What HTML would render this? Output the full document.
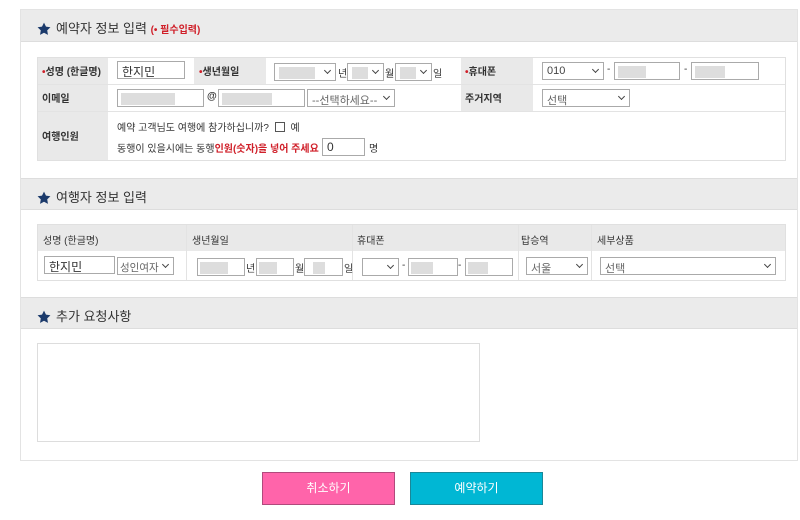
<!DOCTYPE html>
<html><head><meta charset="utf-8"><style>
*{box-sizing:border-box;margin:0;padding:0;white-space:nowrap}
body{width:800px;height:520px;background:#fff;font-family:"Liberation Sans","Noto Sans CJK KR",sans-serif;font-size:11px;color:#333;position:relative;overflow:hidden}
.a{position:absolute}
.box{left:20px;top:9px;width:778px;height:452px;border:1px solid #e3e3e3;background:#fff}
.hd{left:21px;width:776px;height:32px;background:#ebebeb;border-bottom:1px solid #ddd;font-size:13px;color:#333;padding:8px 0 0 16px}
.hd svg{vertical-align:-3px;margin-right:5px}
.gl{background:#e9e9e9}
.ln{background:#e3e3e3}
.in{position:absolute;border:1px solid #aaa;background:#fff;height:18px;font-size:12px;padding:1px 4px;color:#333;overflow:hidden}
.sel{position:absolute;border:1px solid #aaa;background:#fff;height:18px;font-size:11px;padding:2px 4px;color:#666;overflow:hidden}
.sel:after{content:"";position:absolute;right:5px;top:4px;width:4px;height:4px;border-right:1.3px solid #444;border-bottom:1.3px solid #444;transform:rotate(45deg)}
.bl{position:absolute;background:#ddd;height:12px;top:3px}
.lb{position:absolute;font-size:10px;font-weight:600;color:#333}
.r{color:#d0202a}
.t{position:absolute;font-size:10px;color:#333}
</style></head><body>
<div class="a box"></div>
<div class="a hd" style="top:10px"><svg width="14" height="14" viewBox="0 0 24 24"><path d="M12 1l3.4 7 7.6 1-5.5 5.3 1.3 7.7L12 18.4 5.2 22l1.3-7.7L1 9l7.6-1z" fill="#1b3a6b"/></svg>예약자 정보 입력 <span style="font-size:10px;color:#d0202a;font-weight:bold">(• 필수입력)</span></div>
<div class="a" style="left:37px;top:57px;width:749px;height:104px;border:1px solid #e0e0e0"></div>
<div class="a gl" style="left:38px;top:58px;width:70px;height:102px"></div>
<div class="a gl" style="left:194px;top:58px;width:72px;height:27px"></div>
<div class="a gl" style="left:461px;top:58px;width:72px;height:53px"></div>
<div class="a ln" style="left:38px;top:84px;width:747px;height:1px"></div>
<div class="a ln" style="left:38px;top:111px;width:747px;height:1px"></div>
<div class="lb" style="left:42px;top:63px"><span class="r">•</span>성명 (한글명)</div>
<div class="in" style="left:117px;top:61px;width:68px">한지민</div>
<div class="lb" style="left:199px;top:63px"><span class="r">•</span>생년월일</div>
<div class="sel" style="left:274px;top:63px;width:62px"><div class="bl" style="left:4px;width:36px"></div></div>
<div class="t" style="left:338px;top:65px">년</div>
<div class="sel" style="left:347px;top:63px;width:37px"><div class="bl" style="left:4px;width:16px"></div></div>
<div class="t" style="left:385px;top:65px">월</div>
<div class="sel" style="left:395px;top:63px;width:37px"><div class="bl" style="left:4px;width:16px"></div></div>
<div class="t" style="left:433px;top:65px">일</div>
<div class="lb" style="left:465px;top:63px"><span class="r">•</span>휴대폰</div>
<div class="sel" style="left:542px;top:62px;width:62px;color:#444">010</div>
<div class="t" style="left:607px;top:64px">-</div>
<div class="in" style="left:614px;top:62px;width:66px"><div class="bl" style="left:3px;width:28px"></div></div>
<div class="t" style="left:684px;top:64px">-</div>
<div class="in" style="left:691px;top:62px;width:68px"><div class="bl" style="left:3px;width:30px"></div></div>
<div class="lb" style="left:42px;top:90px">이메일</div>
<div class="in" style="left:117px;top:89px;width:87px"><div class="bl" style="left:3px;width:54px"></div></div>
<div class="t" style="left:207px;top:91px;font-weight:bold">@</div>
<div class="in" style="left:218px;top:89px;width:87px"><div class="bl" style="left:3px;width:50px"></div></div>
<div class="sel" style="left:307px;top:89px;width:88px">--선택하세요--</div>
<div class="lb" style="left:465px;top:90px">주거지역</div>
<div class="sel" style="left:542px;top:89px;width:88px">선택</div>
<div class="lb" style="left:42px;top:128px">여행인원</div>
<div class="t" style="left:117px;top:119px">예약 고객님도 여행에 참가하십니까? <span style="display:inline-block;width:10px;height:10px;border:1px solid #555;vertical-align:-1px;margin:0 3px"></span> 예</div>
<div class="t" style="left:117px;top:140px">동행이 있을시에는 동행<b class="r">인원(숫자)을 넣어 주세요 !!</b></div>
<div class="in" style="left:322px;top:138px;width:43px">0</div>
<div class="t" style="left:369px;top:140px">명</div>
<div class="a hd" style="top:178px;border-top:1px solid #ddd"><svg width="14" height="14" viewBox="0 0 24 24"><path d="M12 1l3.4 7 7.6 1-5.5 5.3 1.3 7.7L12 18.4 5.2 22l1.3-7.7L1 9l7.6-1z" fill="#1b3a6b"/></svg>여행자 정보 입력</div>
<div class="a" style="left:37px;top:224px;width:749px;height:57px;border:1px solid #e0e0e0"></div>
<div class="a gl" style="left:38px;top:225px;width:747px;height:26px"></div>
<div class="a ln" style="left:186px;top:225px;width:1px;height:55px"></div>
<div class="a ln" style="left:352px;top:225px;width:1px;height:55px"></div>
<div class="a ln" style="left:518px;top:225px;width:1px;height:55px"></div>
<div class="a ln" style="left:591px;top:225px;width:1px;height:55px"></div>
<div class="lb" style="left:43px;top:232px;font-weight:normal">성명 (한글명)</div>
<div class="lb" style="left:192px;top:232px;font-weight:normal">생년월일</div>
<div class="lb" style="left:357px;top:232px;font-weight:normal">휴대폰</div>
<div class="lb" style="left:521px;top:232px;font-weight:normal">탑승역</div>
<div class="lb" style="left:597px;top:232px;font-weight:normal">세부상품</div>
<div class="in" style="left:44px;top:256px;width:71px">한지민</div>
<div class="sel" style="left:117px;top:257px;width:57px;padding:2px 2px;font-size:10.5px">성인여자</div>
<div class="in" style="left:197px;top:258px;width:48px"><div class="bl" style="left:2px;width:28px"></div></div>
<div class="t" style="left:246px;top:260px">년</div>
<div class="in" style="left:256px;top:258px;width:38px"><div class="bl" style="left:2px;width:18px"></div></div>
<div class="t" style="left:295px;top:260px">월</div>
<div class="in" style="left:304px;top:258px;width:39px"><div class="bl" style="left:8px;width:12px"></div></div>
<div class="t" style="left:344px;top:260px">일</div>
<div class="sel" style="left:362px;top:258px;width:37px"></div>
<div class="t" style="left:402px;top:260px">-</div>
<div class="in" style="left:408px;top:258px;width:50px"><div class="bl" style="left:2px;width:22px"></div></div>
<div class="t" style="left:458px;top:260px">-</div>
<div class="in" style="left:465px;top:258px;width:48px"><div class="bl" style="left:2px;width:20px"></div></div>
<div class="sel" style="left:526px;top:257px;width:62px">서울</div>
<div class="sel" style="left:600px;top:257px;width:176px">선택</div>
<div class="a hd" style="top:297px;border-top:1px solid #ddd"><svg width="14" height="14" viewBox="0 0 24 24"><path d="M12 1l3.4 7 7.6 1-5.5 5.3 1.3 7.7L12 18.4 5.2 22l1.3-7.7L1 9l7.6-1z" fill="#1b3a6b"/></svg>추가 요청사항</div>
<div class="a" style="left:37px;top:343px;width:443px;height:99px;border:1px solid #ddd"></div>
<div class="a" style="left:262px;top:472px;width:133px;height:33px;background:#ff64aa;border:1px solid #b04a7c;color:#fff;font-size:12px;text-align:center;line-height:31px">취소하기</div>
<div class="a" style="left:410px;top:472px;width:133px;height:33px;background:#00b7d4;border:1px solid #1a8798;color:#fff;font-size:12px;text-align:center;line-height:31px">예약하기</div>
</body></html>
